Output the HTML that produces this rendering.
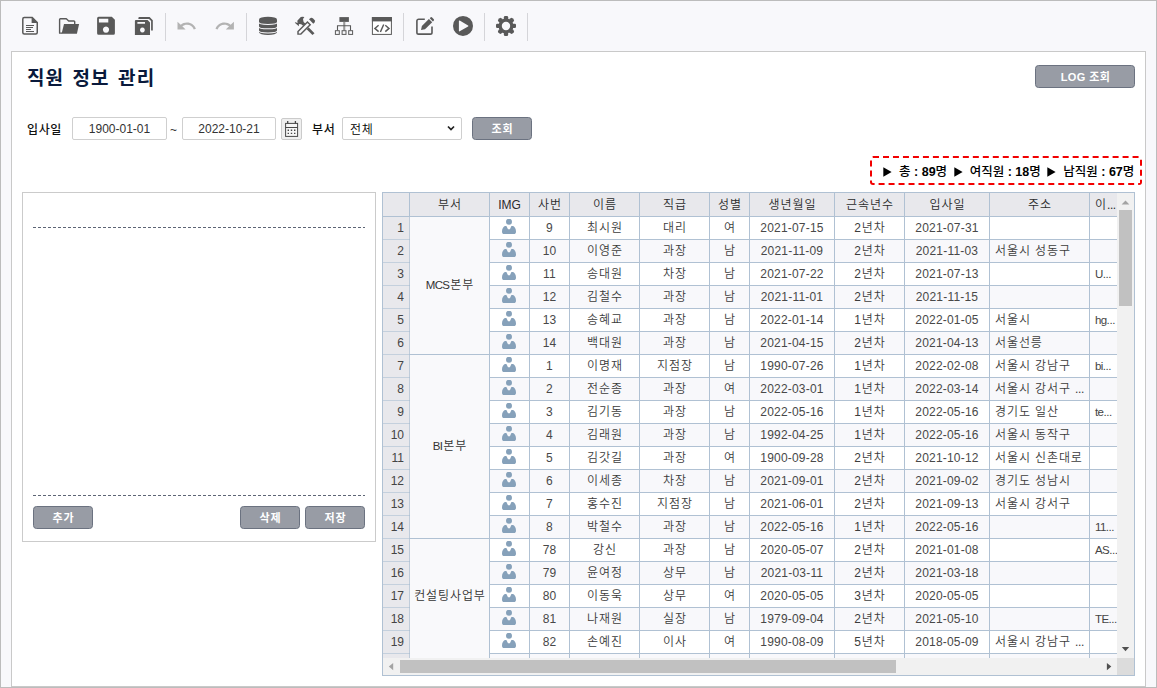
<!DOCTYPE html>
<html lang="ko">
<head>
<meta charset="utf-8">
<title>직원 정보 관리</title>
<style>
*{box-sizing:border-box}
html,body{margin:0;padding:0}
body{width:1157px;height:688px;overflow:hidden;background:#f8f8fb;position:relative;
 font-family:"Liberation Sans","Noto Sans CJK KR",sans-serif;font-size:13px;color:#333}
.abs{position:absolute}
#frame{position:absolute;left:0;top:0;width:1157px;height:688px;border:1px solid #bcbcbc;pointer-events:none;z-index:50}
.tb{position:absolute;top:0;height:51px}
.sep{position:absolute;top:13px;width:1px;height:28px;background:#d4d4d8}
.ic{position:absolute;fill:#595959}
.ic.dis{fill:#b4b4b4}
#panel{position:absolute;left:11px;top:51px;width:1135px;height:636px;background:#fff;border:1px solid #c9c9c9}
#title{position:absolute;left:27px;top:65px;font-size:19px;font-weight:bold;color:#0a1a3c;line-height:28px;white-space:nowrap;letter-spacing:1.1px;word-spacing:2px}
.lb{position:absolute;font-weight:500;color:#111;line-height:23px;white-space:nowrap;font-size:12px;letter-spacing:.6px}
.inp{position:absolute;top:117px;height:23px;border:1px solid #cfcfcf;border-radius:2px;background:#fff;font-size:12px;line-height:21px;padding-top:1px;text-align:center;color:#333}
.btn{position:absolute;height:23px;border:1px solid #6b7280;border-radius:3.5px;background:#989ca5;color:#fff;font-weight:bold;font-size:11px;line-height:21px;padding-top:1px;padding-left:1px;letter-spacing:1px;text-align:center;white-space:nowrap;overflow:hidden}
#stat{position:absolute;left:870px;top:156px;width:272px;height:29px;border:2px dashed #f20000;border-radius:3px;font-weight:500;color:#000;line-height:29px;white-space:nowrap;text-align:left;padding-left:8px;font-size:12.5px}
.ar{fill:#000;margin:0 3.3px;vertical-align:-1px}
#lp{position:absolute;left:22px;top:192px;width:354px;height:350px;border:1px solid #cbcbcb;background:#fff}
.dash{position:absolute;left:33px;width:332px;height:1px;background:repeating-linear-gradient(90deg,#5d6575 0,#5d6575 3px,transparent 3px,transparent 5px)}
#grid{position:absolute;left:382px;top:192px;width:753px;height:484px;border:1px solid #b0c1d3;background:#fff;overflow:hidden}
#gi{position:absolute;left:0;top:0;width:734px;height:465px;overflow:hidden;background:#b0c1d3}
#gi div{position:absolute;height:22px;line-height:22px;font-size:12px;text-align:center;white-space:nowrap;overflow:hidden;color:#333;font-weight:350}
#gi .h{height:23px;line-height:25px;background:#e8e8ec;top:0;font-weight:350;color:#2c2c2c}
#gi .rn{left:0;width:26px;background:#e8e8ec;text-align:right;padding-right:5px;color:#444;box-shadow:0 1px 0 #c4d0dd,1px 0 0 #bfccda;overflow:visible}
#gi .c{background:#fff;color:#3c3c3c;letter-spacing:.2px}
#gi .c.a{background:#f8f8fb}
#gi .c.l{text-align:left;padding-left:5px}
#gi .g{background:#f9f9fb}
#gi .hl{text-align:left;padding-left:5px}
#gi .k{letter-spacing:.9px;padding-left:1px}
#gi .c.k{letter-spacing:.9px}
#gi .e{letter-spacing:-.4px}
#gi .h.hl{padding-left:5px}
#gi .la{font-size:11.5px;letter-spacing:-.7px;margin-right:1px}
#gi .c.l.z{font-size:11.5px;letter-spacing:-.6px;padding-left:5px;color:#444}
#gi .c.d{color:#484848}
#gi .c.l.k{padding-left:5px}
.u{fill:#86a1ba;position:absolute;left:12px;top:2px}
#vs{position:absolute;left:734px;top:0;width:17px;height:465px;background:#f1f1f1}
#hs{position:absolute;left:0;top:465px;width:734px;height:17px;background:#f1f1f1}
#cn{position:absolute;left:734px;top:465px;width:17px;height:17px;background:#dcdcdc}
.th{position:absolute;background:#c1c1c1}
</style>
</head>
<body>
<!-- toolbar -->
<div id="tbar">
<svg class="abs" style="left:0;top:0" width="560" height="51" viewBox="0 0 560 51" fill="#595959">
<rect x="165" y="13" width="1" height="28" fill="#d5d5d9"/>
<rect x="246" y="13" width="1" height="28" fill="#d5d5d9"/>
<rect x="403" y="13" width="1" height="28" fill="#d5d5d9"/>
<rect x="484" y="13" width="1" height="28" fill="#d5d5d9"/>
<rect x="527" y="13" width="1" height="28" fill="#d5d5d9"/>
<path d="M24.3 17.45H32.2L37.25 22.5V32.6a1.5 1.5 0 0 1-1.5 1.5H24.3a1.5 1.5 0 0 1-1.5-1.5V18.95a1.5 1.5 0 0 1 1.5-1.5Z" fill="none" stroke="#595959" stroke-width="1.5"/>
<path d="M31.6 16.9V22.9H37.6Z"/>
<path d="M26 25h8v1h-8zM26 27h7v1h-7zM26 29h5v1h-5zM26 31h8v1h-8z"/>
<path d="M74.7 24.2V21.8a.8.8 0 0 0-.8-.8H68.7L66.3 18.7H60.4a.8.8 0 0 0-.8.8V33.15H62.2" fill="none" stroke="#595959" stroke-width="1.4" stroke-linejoin="round"/>
<path d="M64 24.1H79.1L76.9 33.85H61.6Z"/>
<path d="M98.6 16.7H111.8L114.9 19.8V33.3a1.5 1.5 0 0 1-1.5 1.5H98.6a1.5 1.5 0 0 1-1.5-1.5V18.2a1.5 1.5 0 0 1 1.5-1.5ZM98.9 18.8V22.5H108.3V18.8ZM106 26.5a3.1 3.1 0 1 0 .01 0Z" fill-rule="evenodd"/>
<path d="M135.9 20H147.6L150 22.4V34.9H134.9V21a1 1 0 0 1 1-1ZM137.4 21.9V23.8H145V21.9ZM142.4 27.6a2.4 2.4 0 1 0 .01 0Z" fill-rule="evenodd"/>
<path d="M138.4 19V18.1a1 1 0 0 1 1-1H149.6L152.8 20.3V30.4H151.1V20.9L149 18.9Z"/>
<g fill="#b3b3b3"><path transform="translate(175.7 15.6) scale(.9 .87)" d="M12.5 8c-2.65 0-5.05.99-6.9 2.6L2 7v9h9l-3.62-3.62c1.39-1.16 3.16-1.88 5.12-1.88 3.54 0 6.55 2.31 7.6 5.5l2.37-.78C21.08 11.03 17.15 8 12.5 8z"/>
<path transform="translate(214.1 15.6) scale(.9 .87)" d="M18.4 10.6C16.55 8.99 14.15 8 11.5 8c-4.65 0-8.58 3.03-9.96 7.22L3.9 16c1.05-3.19 4.05-5.5 7.6-5.5 1.95 0 3.73.72 5.12 1.88L13 16h9V7l-3.6 3.6z"/></g>
<path d="M259 19.5a9 2.7 0 0 1 18 0V32.3a9 2.6 0 0 1-18 0Z"/>
<path d="M258.8 22.3A9.2 2.1 0 0 0 277.2 22.3" fill="none" stroke="#f8f8fb" stroke-width="1.05"/>
<path d="M258.8 26.7A9.2 2.1 0 0 0 277.2 26.7" fill="none" stroke="#f8f8fb" stroke-width="1.05"/>
<path d="M258.8 30.8A9.2 2.1 0 0 0 277.2 30.8" fill="none" stroke="#f8f8fb" stroke-width="1.05"/>
<path d="M298 34.1V31.44L307.45 22 310.2 24.75 300.86 34.1Z" fill="#f8f8fb" stroke="#595959" stroke-width="1.45" stroke-linejoin="miter"/>
<path d="M309 19.3L310.6 17.9Q312 17.5 313.4 18.8L314.7 20.2Q315.4 21.6 314.5 22.6L313.3 23.7Z"/>
<path d="M297.3 20.7L300.8 17Q302.6 16.4 304.4 17.1L303 18.9 303.6 22 305.6 23.8 303.4 26 301.2 24.2 298.9 24.1V26.3L294.8 22.7 295.3 22.3 297.6 22.9Z"/>
<path d="M308.6 27.2L314.5 33.2 312.5 35.1 306.6 29.2Z"/>
<rect x="339.4" y="17.1" width="9.5" height="4.8"/>
<rect x="343.2" y="21.9" width="2.1" height="8.6" fill="#9a9a9a"/>
<path d="M337.5 30.5V25.7H350.5V30.5" fill="none" stroke="#595959" stroke-width="1.1"/>
<rect x="335.4" y="30.7" width="3.9" height="3.7" fill="#f8f8fb" stroke="#595959" stroke-width="1"/>
<rect x="342.1" y="30.7" width="3.9" height="3.7" fill="#f8f8fb" stroke="#595959" stroke-width="1"/>
<rect x="348.7" y="30.7" width="3.9" height="3.7" fill="#f8f8fb" stroke="#595959" stroke-width="1"/>
<rect x="372.4" y="17.6" width="19" height="16.8" fill="#fff" stroke="#595959" stroke-width="1"/>
<rect x="371.9" y="17.1" width="20" height="4.3"/>
<path d="M378.6 25.3L374.9 28.4 378.6 31.6M385.3 25.3L389 28.4 385.3 31.6M383.7 24.5L380.4 32" fill="none" stroke="#595959" stroke-width="1.45"/>
<path d="M424.8 19.2H418.6a1.7 1.7 0 0 0-1.7 1.7V32.4a1.7 1.7 0 0 0 1.7 1.7H430.3a1.7 1.7 0 0 0 1.7-1.7V26.6" fill="none" stroke="#595959" stroke-width="1.6"/>
<path d="M421 30L421.9 26 428.9 19 432.2 22.3 425 29.2Z"/>
<path d="M429.8 18.2L430.7 17.3Q431.4 16.8 432.1 17.5L433.8 19.2Q434.4 19.9 433.8 20.6L432.9 21.5Z"/>
<path fill-rule="evenodd" d="M453 25.9a10 10 0 1 0 20 0a10 10 0 1 0-20 0ZM458.9 20.9V30.9Q459 31.6 459.7 31.3L468.1 26.4Q468.7 25.9 468.1 25.4L459.7 20.5Q459 20.2 458.9 20.9Z"/>
<rect x="503.85" y="15.95" width="4.3" height="4.50" rx="1.3" transform="rotate(0.0 506 25.95)"/><rect x="503.85" y="15.95" width="4.3" height="4.50" rx="1.3" transform="rotate(45.0 506 25.95)"/><rect x="503.85" y="15.95" width="4.3" height="4.50" rx="1.3" transform="rotate(90.0 506 25.95)"/><rect x="503.85" y="15.95" width="4.3" height="4.50" rx="1.3" transform="rotate(135.0 506 25.95)"/><rect x="503.85" y="15.95" width="4.3" height="4.50" rx="1.3" transform="rotate(180.0 506 25.95)"/><rect x="503.85" y="15.95" width="4.3" height="4.50" rx="1.3" transform="rotate(225.0 506 25.95)"/><rect x="503.85" y="15.95" width="4.3" height="4.50" rx="1.3" transform="rotate(270.0 506 25.95)"/><rect x="503.85" y="15.95" width="4.3" height="4.50" rx="1.3" transform="rotate(315.0 506 25.95)"/><path fill-rule="evenodd" d="M498.5,25.95a7.5,7.5 0 1,0 15.0,0a7.5,7.5 0 1,0 -15.0,0ZM501.8,25.95a4.2,4.2 0 1,0 8.4,0a4.2,4.2 0 1,0 -8.4,0Z"/>
</svg>
</div>
<div id="panel"></div>
<div id="title">직원 정보 관리</div>
<div class="btn" style="left:1035px;top:65px;width:100px;letter-spacing:.4px">LOG 조회</div>

<div class="lb" style="left:27px;top:119px">입사일</div>
<div class="inp" style="left:72px;width:95px">1900-01-01</div>
<div class="abs" style="left:170px;top:119px;line-height:23px;font-size:12px">~</div>
<div class="inp" style="left:182px;width:94px">2022-10-21</div>
<div class="abs" id="cal" style="left:281px;top:118px;width:21px;height:22px;border:1px solid #cbcbcb;border-radius:2px;background:#efefef"></div>
<svg class="abs" style="left:281px;top:118px" width="21" height="22" viewBox="281 118 21 22"><rect x="285.6" y="123.4" width="12" height="13" fill="#f6f6f6" stroke="#484848"/><path d="M285.6 127.5H297.6" stroke="#484848"/><path d="M287.7 121.1V123.4M295.4 121.1V123.4" stroke="#484848" stroke-width="1.3"/><path d="M287.6 129.5h1.4v1.4h-1.4zM290.8 129.5h1.4v1.4h-1.4zM294 129.5h1.4v1.4h-1.4zM287.6 132.7h1.4v1.4h-1.4zM290.8 132.7h1.4v1.4h-1.4zM294 132.7h1.4v1.4h-1.4z" fill="#484848"/></svg>
<div class="lb" style="left:312px;top:119px">부서</div>
<div class="inp" style="left:342px;width:120px;text-align:left;padding-left:7px;padding-top:2px;font-size:12px;font-weight:350;letter-spacing:.7px;color:#000">전체</div>
<svg class="abs" style="left:447px;top:125px" width="8" height="7" viewBox="0 0 8 7"><path d="M1 1.5L4 4.6 7 1.5" fill="none" stroke="#222" stroke-width="1.7"/></svg>
<div class="btn" style="left:472px;top:117px;width:60px">조회</div>

<div id="stat"><svg class="ar" width="9" height="10" viewBox="0 0 9 10"><path d="M.3 .2L8.6 5 .3 9.8Z"/></svg> 총 <b>:</b> <b>89</b>명 <svg class="ar" width="9" height="10" viewBox="0 0 9 10"><path d="M.3 .2L8.6 5 .3 9.8Z"/></svg> 여직원 <b>:</b> <b>18</b>명 <svg class="ar" width="9" height="10" viewBox="0 0 9 10"><path d="M.3 .2L8.6 5 .3 9.8Z"/></svg> 남직원 <b>:</b> <b>67</b>명</div>

<div id="lp"></div>
<div class="dash" style="top:227px"></div>
<div class="dash" style="top:495px"></div>
<div class="btn" style="left:33px;top:506px;width:60px">추가</div>
<div class="btn" style="left:240px;top:506px;width:60px">삭제</div>
<div class="btn" style="left:305px;top:506px;width:60px">저장</div>

<div id="grid">
<div id="gi">
<div class="h k" style="left:0px;top:0;width:26px"></div>
<div class="h k" style="left:27px;top:0;width:79px">부서</div>
<div class="h" style="left:107px;top:0;width:39px">IMG</div>
<div class="h k" style="left:147px;top:0;width:39px">사번</div>
<div class="h k" style="left:187px;top:0;width:69px">이름</div>
<div class="h k" style="left:257px;top:0;width:69px">직급</div>
<div class="h k" style="left:327px;top:0;width:39px">성별</div>
<div class="h k" style="left:367px;top:0;width:84px">생년월일</div>
<div class="h k" style="left:452px;top:0;width:69px">근속년수</div>
<div class="h k" style="left:522px;top:0;width:84px">입사일</div>
<div class="h k" style="left:607px;top:0;width:99px">주소</div>
<div class="h hl k" style="left:707px;top:0;width:27px">이<span class="e">...</span></div>
<div class="rn" style="top:24px">1</div>
<div class="c im" style="left:107px;top:24px;width:39px"><svg class="u" viewBox="0 0 14 16" width="14" height="16"><circle cx="7" cy="2.75" r="3"/><path d="M2.9 6.9H4.4L6 10.25H7.9L9.4 6.9H11.1C12.6 7.3 14 9.8 14 12.4 14 14.2 13.2 15 11.8 15H2.2C.8 15 0 14.2 0 12.4 0 9.8 1.4 7.3 2.9 6.9Z"/></svg></div>
<div class="c d" style="left:147px;top:24px;width:39px">9</div>
<div class="c k" style="left:187px;top:24px;width:69px">최시원</div>
<div class="c k" style="left:257px;top:24px;width:69px">대리</div>
<div class="c k" style="left:327px;top:24px;width:39px">여</div>
<div class="c d" style="left:367px;top:24px;width:84px">2021-07-15</div>
<div class="c k" style="left:452px;top:24px;width:69px">2년차</div>
<div class="c d" style="left:522px;top:24px;width:84px">2021-07-31</div>
<div class="c l k" style="left:607px;top:24px;width:99px"></div>
<div class="c l z" style="left:707px;top:24px;width:27px"></div>
<div class="rn" style="top:47px">2</div>
<div class="c a im" style="left:107px;top:47px;width:39px"><svg class="u" viewBox="0 0 14 16" width="14" height="16"><circle cx="7" cy="2.75" r="3"/><path d="M2.9 6.9H4.4L6 10.25H7.9L9.4 6.9H11.1C12.6 7.3 14 9.8 14 12.4 14 14.2 13.2 15 11.8 15H2.2C.8 15 0 14.2 0 12.4 0 9.8 1.4 7.3 2.9 6.9Z"/></svg></div>
<div class="c a d" style="left:147px;top:47px;width:39px">10</div>
<div class="c a k" style="left:187px;top:47px;width:69px">이영준</div>
<div class="c a k" style="left:257px;top:47px;width:69px">과장</div>
<div class="c a k" style="left:327px;top:47px;width:39px">남</div>
<div class="c a d" style="left:367px;top:47px;width:84px">2021-11-09</div>
<div class="c a k" style="left:452px;top:47px;width:69px">2년차</div>
<div class="c a d" style="left:522px;top:47px;width:84px">2021-11-03</div>
<div class="c a l k" style="left:607px;top:47px;width:99px">서울시 성동구</div>
<div class="c a l z" style="left:707px;top:47px;width:27px"></div>
<div class="rn" style="top:70px">3</div>
<div class="c im" style="left:107px;top:70px;width:39px"><svg class="u" viewBox="0 0 14 16" width="14" height="16"><circle cx="7" cy="2.75" r="3"/><path d="M2.9 6.9H4.4L6 10.25H7.9L9.4 6.9H11.1C12.6 7.3 14 9.8 14 12.4 14 14.2 13.2 15 11.8 15H2.2C.8 15 0 14.2 0 12.4 0 9.8 1.4 7.3 2.9 6.9Z"/></svg></div>
<div class="c d" style="left:147px;top:70px;width:39px">11</div>
<div class="c k" style="left:187px;top:70px;width:69px">송대원</div>
<div class="c k" style="left:257px;top:70px;width:69px">차장</div>
<div class="c k" style="left:327px;top:70px;width:39px">남</div>
<div class="c d" style="left:367px;top:70px;width:84px">2021-07-22</div>
<div class="c k" style="left:452px;top:70px;width:69px">2년차</div>
<div class="c d" style="left:522px;top:70px;width:84px">2021-07-13</div>
<div class="c l k" style="left:607px;top:70px;width:99px"></div>
<div class="c l z" style="left:707px;top:70px;width:27px">U<span class="e">...</span></div>
<div class="rn" style="top:93px">4</div>
<div class="c a im" style="left:107px;top:93px;width:39px"><svg class="u" viewBox="0 0 14 16" width="14" height="16"><circle cx="7" cy="2.75" r="3"/><path d="M2.9 6.9H4.4L6 10.25H7.9L9.4 6.9H11.1C12.6 7.3 14 9.8 14 12.4 14 14.2 13.2 15 11.8 15H2.2C.8 15 0 14.2 0 12.4 0 9.8 1.4 7.3 2.9 6.9Z"/></svg></div>
<div class="c a d" style="left:147px;top:93px;width:39px">12</div>
<div class="c a k" style="left:187px;top:93px;width:69px">김철수</div>
<div class="c a k" style="left:257px;top:93px;width:69px">과장</div>
<div class="c a k" style="left:327px;top:93px;width:39px">남</div>
<div class="c a d" style="left:367px;top:93px;width:84px">2021-11-01</div>
<div class="c a k" style="left:452px;top:93px;width:69px">2년차</div>
<div class="c a d" style="left:522px;top:93px;width:84px">2021-11-15</div>
<div class="c a l k" style="left:607px;top:93px;width:99px"></div>
<div class="c a l z" style="left:707px;top:93px;width:27px"></div>
<div class="rn" style="top:116px">5</div>
<div class="c im" style="left:107px;top:116px;width:39px"><svg class="u" viewBox="0 0 14 16" width="14" height="16"><circle cx="7" cy="2.75" r="3"/><path d="M2.9 6.9H4.4L6 10.25H7.9L9.4 6.9H11.1C12.6 7.3 14 9.8 14 12.4 14 14.2 13.2 15 11.8 15H2.2C.8 15 0 14.2 0 12.4 0 9.8 1.4 7.3 2.9 6.9Z"/></svg></div>
<div class="c d" style="left:147px;top:116px;width:39px">13</div>
<div class="c k" style="left:187px;top:116px;width:69px">송혜교</div>
<div class="c k" style="left:257px;top:116px;width:69px">과장</div>
<div class="c k" style="left:327px;top:116px;width:39px">남</div>
<div class="c d" style="left:367px;top:116px;width:84px">2022-01-14</div>
<div class="c k" style="left:452px;top:116px;width:69px">1년차</div>
<div class="c d" style="left:522px;top:116px;width:84px">2022-01-05</div>
<div class="c l k" style="left:607px;top:116px;width:99px">서울시</div>
<div class="c l z" style="left:707px;top:116px;width:27px">hg<span class="e">...</span></div>
<div class="rn" style="top:139px">6</div>
<div class="c a im" style="left:107px;top:139px;width:39px"><svg class="u" viewBox="0 0 14 16" width="14" height="16"><circle cx="7" cy="2.75" r="3"/><path d="M2.9 6.9H4.4L6 10.25H7.9L9.4 6.9H11.1C12.6 7.3 14 9.8 14 12.4 14 14.2 13.2 15 11.8 15H2.2C.8 15 0 14.2 0 12.4 0 9.8 1.4 7.3 2.9 6.9Z"/></svg></div>
<div class="c a d" style="left:147px;top:139px;width:39px">14</div>
<div class="c a k" style="left:187px;top:139px;width:69px">백대원</div>
<div class="c a k" style="left:257px;top:139px;width:69px">과장</div>
<div class="c a k" style="left:327px;top:139px;width:39px">남</div>
<div class="c a d" style="left:367px;top:139px;width:84px">2021-04-15</div>
<div class="c a k" style="left:452px;top:139px;width:69px">2년차</div>
<div class="c a d" style="left:522px;top:139px;width:84px">2021-04-13</div>
<div class="c a l k" style="left:607px;top:139px;width:99px">서울선릉</div>
<div class="c a l z" style="left:707px;top:139px;width:27px"></div>
<div class="rn" style="top:162px">7</div>
<div class="c im" style="left:107px;top:162px;width:39px"><svg class="u" viewBox="0 0 14 16" width="14" height="16"><circle cx="7" cy="2.75" r="3"/><path d="M2.9 6.9H4.4L6 10.25H7.9L9.4 6.9H11.1C12.6 7.3 14 9.8 14 12.4 14 14.2 13.2 15 11.8 15H2.2C.8 15 0 14.2 0 12.4 0 9.8 1.4 7.3 2.9 6.9Z"/></svg></div>
<div class="c d" style="left:147px;top:162px;width:39px">1</div>
<div class="c k" style="left:187px;top:162px;width:69px">이명재</div>
<div class="c k" style="left:257px;top:162px;width:69px">지점장</div>
<div class="c k" style="left:327px;top:162px;width:39px">남</div>
<div class="c d" style="left:367px;top:162px;width:84px">1990-07-26</div>
<div class="c k" style="left:452px;top:162px;width:69px">1년차</div>
<div class="c d" style="left:522px;top:162px;width:84px">2022-02-08</div>
<div class="c l k" style="left:607px;top:162px;width:99px">서울시 강남구</div>
<div class="c l z" style="left:707px;top:162px;width:27px">bi<span class="e">...</span></div>
<div class="rn" style="top:185px">8</div>
<div class="c a im" style="left:107px;top:185px;width:39px"><svg class="u" viewBox="0 0 14 16" width="14" height="16"><circle cx="7" cy="2.75" r="3"/><path d="M2.9 6.9H4.4L6 10.25H7.9L9.4 6.9H11.1C12.6 7.3 14 9.8 14 12.4 14 14.2 13.2 15 11.8 15H2.2C.8 15 0 14.2 0 12.4 0 9.8 1.4 7.3 2.9 6.9Z"/></svg></div>
<div class="c a d" style="left:147px;top:185px;width:39px">2</div>
<div class="c a k" style="left:187px;top:185px;width:69px">전순종</div>
<div class="c a k" style="left:257px;top:185px;width:69px">과장</div>
<div class="c a k" style="left:327px;top:185px;width:39px">여</div>
<div class="c a d" style="left:367px;top:185px;width:84px">2022-03-01</div>
<div class="c a k" style="left:452px;top:185px;width:69px">1년차</div>
<div class="c a d" style="left:522px;top:185px;width:84px">2022-03-14</div>
<div class="c a l k" style="left:607px;top:185px;width:99px">서울시 강서구 <span class="e">...</span></div>
<div class="c a l z" style="left:707px;top:185px;width:27px"></div>
<div class="rn" style="top:208px">9</div>
<div class="c im" style="left:107px;top:208px;width:39px"><svg class="u" viewBox="0 0 14 16" width="14" height="16"><circle cx="7" cy="2.75" r="3"/><path d="M2.9 6.9H4.4L6 10.25H7.9L9.4 6.9H11.1C12.6 7.3 14 9.8 14 12.4 14 14.2 13.2 15 11.8 15H2.2C.8 15 0 14.2 0 12.4 0 9.8 1.4 7.3 2.9 6.9Z"/></svg></div>
<div class="c d" style="left:147px;top:208px;width:39px">3</div>
<div class="c k" style="left:187px;top:208px;width:69px">김기동</div>
<div class="c k" style="left:257px;top:208px;width:69px">과장</div>
<div class="c k" style="left:327px;top:208px;width:39px">남</div>
<div class="c d" style="left:367px;top:208px;width:84px">2022-05-16</div>
<div class="c k" style="left:452px;top:208px;width:69px">1년차</div>
<div class="c d" style="left:522px;top:208px;width:84px">2022-05-16</div>
<div class="c l k" style="left:607px;top:208px;width:99px">경기도 일산</div>
<div class="c l z" style="left:707px;top:208px;width:27px">te<span class="e">...</span></div>
<div class="rn" style="top:231px">10</div>
<div class="c a im" style="left:107px;top:231px;width:39px"><svg class="u" viewBox="0 0 14 16" width="14" height="16"><circle cx="7" cy="2.75" r="3"/><path d="M2.9 6.9H4.4L6 10.25H7.9L9.4 6.9H11.1C12.6 7.3 14 9.8 14 12.4 14 14.2 13.2 15 11.8 15H2.2C.8 15 0 14.2 0 12.4 0 9.8 1.4 7.3 2.9 6.9Z"/></svg></div>
<div class="c a d" style="left:147px;top:231px;width:39px">4</div>
<div class="c a k" style="left:187px;top:231px;width:69px">김래원</div>
<div class="c a k" style="left:257px;top:231px;width:69px">과장</div>
<div class="c a k" style="left:327px;top:231px;width:39px">남</div>
<div class="c a d" style="left:367px;top:231px;width:84px">1992-04-25</div>
<div class="c a k" style="left:452px;top:231px;width:69px">1년차</div>
<div class="c a d" style="left:522px;top:231px;width:84px">2022-05-16</div>
<div class="c a l k" style="left:607px;top:231px;width:99px">서울시 동작구</div>
<div class="c a l z" style="left:707px;top:231px;width:27px"></div>
<div class="rn" style="top:254px">11</div>
<div class="c im" style="left:107px;top:254px;width:39px"><svg class="u" viewBox="0 0 14 16" width="14" height="16"><circle cx="7" cy="2.75" r="3"/><path d="M2.9 6.9H4.4L6 10.25H7.9L9.4 6.9H11.1C12.6 7.3 14 9.8 14 12.4 14 14.2 13.2 15 11.8 15H2.2C.8 15 0 14.2 0 12.4 0 9.8 1.4 7.3 2.9 6.9Z"/></svg></div>
<div class="c d" style="left:147px;top:254px;width:39px">5</div>
<div class="c k" style="left:187px;top:254px;width:69px">김갓길</div>
<div class="c k" style="left:257px;top:254px;width:69px">과장</div>
<div class="c k" style="left:327px;top:254px;width:39px">여</div>
<div class="c d" style="left:367px;top:254px;width:84px">1900-09-28</div>
<div class="c k" style="left:452px;top:254px;width:69px">2년차</div>
<div class="c d" style="left:522px;top:254px;width:84px">2021-10-12</div>
<div class="c l k" style="left:607px;top:254px;width:99px">서울시 신촌대로</div>
<div class="c l z" style="left:707px;top:254px;width:27px"></div>
<div class="rn" style="top:277px">12</div>
<div class="c a im" style="left:107px;top:277px;width:39px"><svg class="u" viewBox="0 0 14 16" width="14" height="16"><circle cx="7" cy="2.75" r="3"/><path d="M2.9 6.9H4.4L6 10.25H7.9L9.4 6.9H11.1C12.6 7.3 14 9.8 14 12.4 14 14.2 13.2 15 11.8 15H2.2C.8 15 0 14.2 0 12.4 0 9.8 1.4 7.3 2.9 6.9Z"/></svg></div>
<div class="c a d" style="left:147px;top:277px;width:39px">6</div>
<div class="c a k" style="left:187px;top:277px;width:69px">이세종</div>
<div class="c a k" style="left:257px;top:277px;width:69px">차장</div>
<div class="c a k" style="left:327px;top:277px;width:39px">남</div>
<div class="c a d" style="left:367px;top:277px;width:84px">2021-09-01</div>
<div class="c a k" style="left:452px;top:277px;width:69px">2년차</div>
<div class="c a d" style="left:522px;top:277px;width:84px">2021-09-02</div>
<div class="c a l k" style="left:607px;top:277px;width:99px">경기도 성남시</div>
<div class="c a l z" style="left:707px;top:277px;width:27px"></div>
<div class="rn" style="top:300px">13</div>
<div class="c im" style="left:107px;top:300px;width:39px"><svg class="u" viewBox="0 0 14 16" width="14" height="16"><circle cx="7" cy="2.75" r="3"/><path d="M2.9 6.9H4.4L6 10.25H7.9L9.4 6.9H11.1C12.6 7.3 14 9.8 14 12.4 14 14.2 13.2 15 11.8 15H2.2C.8 15 0 14.2 0 12.4 0 9.8 1.4 7.3 2.9 6.9Z"/></svg></div>
<div class="c d" style="left:147px;top:300px;width:39px">7</div>
<div class="c k" style="left:187px;top:300px;width:69px">홍수진</div>
<div class="c k" style="left:257px;top:300px;width:69px">지점장</div>
<div class="c k" style="left:327px;top:300px;width:39px">남</div>
<div class="c d" style="left:367px;top:300px;width:84px">2021-06-01</div>
<div class="c k" style="left:452px;top:300px;width:69px">2년차</div>
<div class="c d" style="left:522px;top:300px;width:84px">2021-09-13</div>
<div class="c l k" style="left:607px;top:300px;width:99px">서울시 강서구</div>
<div class="c l z" style="left:707px;top:300px;width:27px"></div>
<div class="rn" style="top:323px">14</div>
<div class="c a im" style="left:107px;top:323px;width:39px"><svg class="u" viewBox="0 0 14 16" width="14" height="16"><circle cx="7" cy="2.75" r="3"/><path d="M2.9 6.9H4.4L6 10.25H7.9L9.4 6.9H11.1C12.6 7.3 14 9.8 14 12.4 14 14.2 13.2 15 11.8 15H2.2C.8 15 0 14.2 0 12.4 0 9.8 1.4 7.3 2.9 6.9Z"/></svg></div>
<div class="c a d" style="left:147px;top:323px;width:39px">8</div>
<div class="c a k" style="left:187px;top:323px;width:69px">박철수</div>
<div class="c a k" style="left:257px;top:323px;width:69px">과장</div>
<div class="c a k" style="left:327px;top:323px;width:39px">남</div>
<div class="c a d" style="left:367px;top:323px;width:84px">2022-05-16</div>
<div class="c a k" style="left:452px;top:323px;width:69px">1년차</div>
<div class="c a d" style="left:522px;top:323px;width:84px">2022-05-16</div>
<div class="c a l k" style="left:607px;top:323px;width:99px"></div>
<div class="c a l z" style="left:707px;top:323px;width:27px">11<span class="e">...</span></div>
<div class="rn" style="top:346px">15</div>
<div class="c im" style="left:107px;top:346px;width:39px"><svg class="u" viewBox="0 0 14 16" width="14" height="16"><circle cx="7" cy="2.75" r="3"/><path d="M2.9 6.9H4.4L6 10.25H7.9L9.4 6.9H11.1C12.6 7.3 14 9.8 14 12.4 14 14.2 13.2 15 11.8 15H2.2C.8 15 0 14.2 0 12.4 0 9.8 1.4 7.3 2.9 6.9Z"/></svg></div>
<div class="c d" style="left:147px;top:346px;width:39px">78</div>
<div class="c k" style="left:187px;top:346px;width:69px">강신</div>
<div class="c k" style="left:257px;top:346px;width:69px">과장</div>
<div class="c k" style="left:327px;top:346px;width:39px">남</div>
<div class="c d" style="left:367px;top:346px;width:84px">2020-05-07</div>
<div class="c k" style="left:452px;top:346px;width:69px">2년차</div>
<div class="c d" style="left:522px;top:346px;width:84px">2021-01-08</div>
<div class="c l k" style="left:607px;top:346px;width:99px"></div>
<div class="c l z" style="left:707px;top:346px;width:27px">AS<span class="e">...</span></div>
<div class="rn" style="top:369px">16</div>
<div class="c a im" style="left:107px;top:369px;width:39px"><svg class="u" viewBox="0 0 14 16" width="14" height="16"><circle cx="7" cy="2.75" r="3"/><path d="M2.9 6.9H4.4L6 10.25H7.9L9.4 6.9H11.1C12.6 7.3 14 9.8 14 12.4 14 14.2 13.2 15 11.8 15H2.2C.8 15 0 14.2 0 12.4 0 9.8 1.4 7.3 2.9 6.9Z"/></svg></div>
<div class="c a d" style="left:147px;top:369px;width:39px">79</div>
<div class="c a k" style="left:187px;top:369px;width:69px">윤여정</div>
<div class="c a k" style="left:257px;top:369px;width:69px">상무</div>
<div class="c a k" style="left:327px;top:369px;width:39px">남</div>
<div class="c a d" style="left:367px;top:369px;width:84px">2021-03-11</div>
<div class="c a k" style="left:452px;top:369px;width:69px">2년차</div>
<div class="c a d" style="left:522px;top:369px;width:84px">2021-03-18</div>
<div class="c a l k" style="left:607px;top:369px;width:99px"></div>
<div class="c a l z" style="left:707px;top:369px;width:27px"></div>
<div class="rn" style="top:392px">17</div>
<div class="c im" style="left:107px;top:392px;width:39px"><svg class="u" viewBox="0 0 14 16" width="14" height="16"><circle cx="7" cy="2.75" r="3"/><path d="M2.9 6.9H4.4L6 10.25H7.9L9.4 6.9H11.1C12.6 7.3 14 9.8 14 12.4 14 14.2 13.2 15 11.8 15H2.2C.8 15 0 14.2 0 12.4 0 9.8 1.4 7.3 2.9 6.9Z"/></svg></div>
<div class="c d" style="left:147px;top:392px;width:39px">80</div>
<div class="c k" style="left:187px;top:392px;width:69px">이동욱</div>
<div class="c k" style="left:257px;top:392px;width:69px">상무</div>
<div class="c k" style="left:327px;top:392px;width:39px">여</div>
<div class="c d" style="left:367px;top:392px;width:84px">2020-05-05</div>
<div class="c k" style="left:452px;top:392px;width:69px">3년차</div>
<div class="c d" style="left:522px;top:392px;width:84px">2020-05-05</div>
<div class="c l k" style="left:607px;top:392px;width:99px"></div>
<div class="c l z" style="left:707px;top:392px;width:27px"></div>
<div class="rn" style="top:415px">18</div>
<div class="c a im" style="left:107px;top:415px;width:39px"><svg class="u" viewBox="0 0 14 16" width="14" height="16"><circle cx="7" cy="2.75" r="3"/><path d="M2.9 6.9H4.4L6 10.25H7.9L9.4 6.9H11.1C12.6 7.3 14 9.8 14 12.4 14 14.2 13.2 15 11.8 15H2.2C.8 15 0 14.2 0 12.4 0 9.8 1.4 7.3 2.9 6.9Z"/></svg></div>
<div class="c a d" style="left:147px;top:415px;width:39px">81</div>
<div class="c a k" style="left:187px;top:415px;width:69px">나재원</div>
<div class="c a k" style="left:257px;top:415px;width:69px">실장</div>
<div class="c a k" style="left:327px;top:415px;width:39px">남</div>
<div class="c a d" style="left:367px;top:415px;width:84px">1979-09-04</div>
<div class="c a k" style="left:452px;top:415px;width:69px">2년차</div>
<div class="c a d" style="left:522px;top:415px;width:84px">2021-05-10</div>
<div class="c a l k" style="left:607px;top:415px;width:99px"></div>
<div class="c a l z" style="left:707px;top:415px;width:27px">TE<span class="e">...</span></div>
<div class="rn" style="top:438px">19</div>
<div class="c im" style="left:107px;top:438px;width:39px"><svg class="u" viewBox="0 0 14 16" width="14" height="16"><circle cx="7" cy="2.75" r="3"/><path d="M2.9 6.9H4.4L6 10.25H7.9L9.4 6.9H11.1C12.6 7.3 14 9.8 14 12.4 14 14.2 13.2 15 11.8 15H2.2C.8 15 0 14.2 0 12.4 0 9.8 1.4 7.3 2.9 6.9Z"/></svg></div>
<div class="c d" style="left:147px;top:438px;width:39px">82</div>
<div class="c k" style="left:187px;top:438px;width:69px">손예진</div>
<div class="c k" style="left:257px;top:438px;width:69px">이사</div>
<div class="c k" style="left:327px;top:438px;width:39px">여</div>
<div class="c d" style="left:367px;top:438px;width:84px">1990-08-09</div>
<div class="c k" style="left:452px;top:438px;width:69px">5년차</div>
<div class="c d" style="left:522px;top:438px;width:84px">2018-05-09</div>
<div class="c l k" style="left:607px;top:438px;width:99px">서울시 강남구 <span class="e">...</span></div>
<div class="c l z" style="left:707px;top:438px;width:27px"></div>
<div class="rn" style="top:461px">20</div>
<div class="c a im" style="left:107px;top:461px;width:39px"></div>
<div class="c a d" style="left:147px;top:461px;width:39px"></div>
<div class="c a k" style="left:187px;top:461px;width:69px"></div>
<div class="c a k" style="left:257px;top:461px;width:69px"></div>
<div class="c a k" style="left:327px;top:461px;width:39px"></div>
<div class="c a d" style="left:367px;top:461px;width:84px"></div>
<div class="c a k" style="left:452px;top:461px;width:69px"></div>
<div class="c a d" style="left:522px;top:461px;width:84px"></div>
<div class="c a l k" style="left:607px;top:461px;width:99px"></div>
<div class="c a l z" style="left:707px;top:461px;width:27px"></div>
<div class="g k" style="left:27px;top:24px;width:79px;height:137px;line-height:137px"><span class="la">MCS</span>본부</div>
<div class="g k" style="left:27px;top:162px;width:79px;height:183px;line-height:183px"><span class="la">BI</span>본부</div>
<div class="g k" style="left:27px;top:346px;width:79px;height:137px;line-height:114px">컨설팅사업부</div>
</div>
<div id="vs">
 <svg class="abs" style="left:4px;top:7px" width="9" height="5" viewBox="0 0 9 5"><path d="M.6 4.6L4.5 .4 8.4 4.6Z" fill="#a3a3a3"/></svg>
 <div class="th" style="left:2px;top:17px;width:13px;height:96px"></div>
 <svg class="abs" style="left:4px;top:453px" width="9" height="6" viewBox="0 0 9 6"><path d="M.8 1L4.5 5.2 8.2 1Z" fill="#505050"/></svg>
</div>
<div id="hs">
 <svg class="abs" style="left:5px;top:4px" width="6" height="9" viewBox="0 0 6 9"><path d="M5.2 1L.8 4.6 5.2 8.2Z" fill="#a3a3a3"/></svg>
 <div class="th" style="left:17px;top:2px;width:496px;height:13px"></div>
 <svg class="abs" style="left:723px;top:4px" width="6" height="9" viewBox="0 0 6 9"><path d="M.9 1L5.3 4.6 .9 8.2Z" fill="#505050"/></svg>
</div>
<div id="cn"></div>
</div>
<div id="frame"></div>
</body>
</html>
